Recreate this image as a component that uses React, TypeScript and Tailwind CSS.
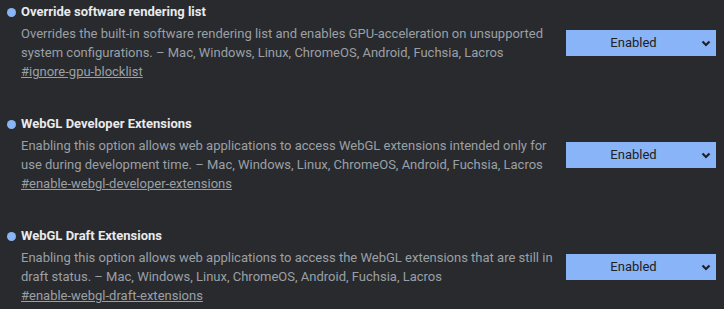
import React from 'react';

type Flag = {
    title: string;
    lines: string[];
    link: string;
};

const flags: Flag[] = [
    {
        title: 'Override software rendering list',
        lines: [
            'Overrides the built-in software rendering list and enables GPU-acceleration on unsupported',
            'system configurations. – Mac, Windows, Linux, ChromeOS, Android, Fuchsia, Lacros',
        ],
        link: '#ignore-gpu-blocklist',
    },
    {
        title: 'WebGL Developer Extensions',
        lines: [
            'Enabling this option allows web applications to access WebGL extensions intended only for',
            'use during development time. – Mac, Windows, Linux, ChromeOS, Android, Fuchsia, Lacros',
        ],
        link: '#enable-webgl-developer-extensions',
    },
    {
        title: 'WebGL Draft Extensions',
        lines: [
            'Enabling this option allows web applications to access the WebGL extensions that are still in',
            'draft status. – Mac, Windows, Linux, ChromeOS, Android, Fuchsia, Lacros',
        ],
        link: '#enable-webgl-draft-extensions',
    },
];

const Chevron = () => (
    <svg width="10" height="7" viewBox="0 0 10 7" className="shrink-0">
        <polyline points="1.5,1.5 5,5 8.5,1.5" fill="none" stroke="#202124" strokeWidth="2.2" />
    </svg>
);

const App: React.FC = () => {
    return (
        <div className="w-[724px] h-[309px] overflow-hidden bg-[#292a2d] font-['Roboto',sans-serif] text-[13px]">
            <div className="flex flex-col gap-[32px] pt-[2px]">
                {flags.map((flag) => (
                    <div key={flag.link} className="flex items-center">
                        <div className="flex flex-col w-[566px] pl-[7px]">
                            <div className="flex items-center h-[20px] gap-[5px]">
                                <span className="w-[9px] h-[9px] rounded-full bg-[#8ab4f8]"></span>
                                <span className="font-bold text-[#e8eaed]">{flag.title}</span>
                            </div>
                            <div className="pl-[14px] text-[#9aa0a6] leading-[19px] mt-[2px]">
                                {flag.lines.map((line) => (
                                    <div key={line} className="whitespace-nowrap">{line}</div>
                                ))}
                            </div>
                            <div className="pl-[14px] leading-[20px]">
                                <span className="text-[#9aa0a6] underline">{flag.link}</span>
                            </div>
                        </div>
                        <div className="w-[150px] h-[26px] bg-[#8ab4f8] flex items-center pr-[5px] mt-[2px]">
                            <span className="flex-1 text-center text-[#202124] text-[13px]">Enabled</span>
                            <Chevron />
                        </div>
                    </div>
                ))}
            </div>
        </div>
    );
};

export default App;
